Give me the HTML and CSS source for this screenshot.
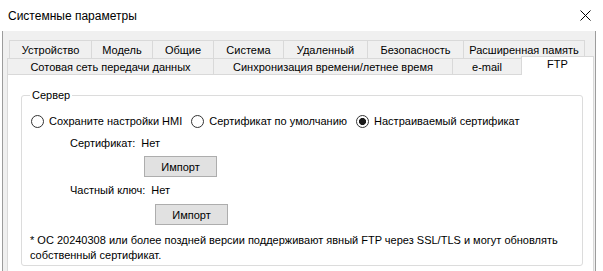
FILE: index.html
```html
<!DOCTYPE html>
<html lang="ru">
<head>
    <meta charset="UTF-8">
    <meta name="viewport" content="width=device-width, initial-scale=1.0">
    <title>Системные параметры</title>
    <link rel="stylesheet" href="styles.css">
</head>
<body>
    <div class="window">
        <div class="titlebar">
            <span class="title">Системные параметры</span>
            <button class="close" title="Закрыть">
                <svg width="11" height="11" viewBox="0 0 11 11">
                    <path d="M0.5 0.5 L10.5 10.5 M10.5 0.5 L0.5 10.5" stroke="#000" stroke-width="1" fill="none"/>
                </svg>
            </button>
        </div>

        <div class="client">
            <div class="tabs">
                <div class="tab-row back">
                    <div class="tab w-device">Устройство</div>
                    <div class="tab w-model">Модель</div>
                    <div class="tab w-common">Общие</div>
                    <div class="tab w-system">Система</div>
                    <div class="tab w-remote">Удаленный</div>
                    <div class="tab w-security">Безопасность</div>
                    <div class="tab w-memory">Расширенная память</div>
                </div>
                <div class="tab-row front">
                    <div class="tab w-cell">Сотовая сеть передачи данных</div>
                    <div class="tab w-sync">Синхронизация времени/летнее время</div>
                    <div class="tab w-mail">e-mail</div>
                    <div class="tab w-ftp selected">FTP</div>
                </div>
            </div>

            <div class="pane">
                <fieldset class="group">
                    <legend>Сервер</legend>

                    <div class="radios">
                        <label class="radio"><input type="radio" name="cert"> Сохраните настройки HMI</label>
                        <label class="radio"><input type="radio" name="cert"> Сертификат по умолчанию</label>
                        <label class="radio"><input type="radio" name="cert" checked> Настраиваемый сертификат</label>
                    </div>

                    <div class="field">
                        <span>Сертификат:</span>
                        <span>Нет</span>
                    </div>
                    <button class="btn btn-cert">Импорт</button>

                    <div class="field field-key">
                        <span>Частный ключ:</span>
                        <span>Нет</span>
                    </div>
                    <button class="btn btn-key">Импорт</button>

                    <p class="note">* ОС 20240308 или более поздней версии поддерживают явный FTP через SSL/TLS и могут обновлять<br>собственный сертификат.</p>
                </fieldset>
            </div>
        </div>
    </div>
</body>
</html>
```

FILE: styles.css
```css
* {
    margin: 0;
    padding: 0;
    box-sizing: border-box;
    font-family: 'Liberation Sans', Arial, sans-serif;
    font-size: 11px;
    color: #000;
}

body {
    background-color: #fff;
    overflow: hidden;
}

.window {
    width: 603px;
    height: 271px;
    display: flex;
    flex-direction: column;
    overflow: hidden;
}

/* title bar */
.titlebar {
    height: 31px;
    flex-shrink: 0;
    display: flex;
    align-items: center;
    justify-content: space-between;
    padding-left: 8px;
    padding-right: 12px;
    background-color: #fff;
}

.title {
    font-size: 12px;
}

.close {
    border: none;
    background: none;
    display: flex;
    align-items: center;
    cursor: pointer;
}

/* dialog body */
.client {
    flex: 1;
    min-height: 0;
    margin: 0 7px 0 2px;
    padding: 9px 1px 0 4px;
    background-color: #f0f0f0;
    border-left: 1px solid #9c9c9c;
    border-right: 1px solid #9c9c9c;
    display: flex;
    flex-direction: column;
}

.tabs {
    flex-shrink: 0;
}

.tab-row {
    display: flex;
}

.tab-row.back {
    margin-left: 2px;
}

.tab {
    border: 1px solid #d9d9d9;
    border-bottom: none;
    background-color: #f0f0f0;
    text-align: center;
    white-space: nowrap;
    margin-left: -1px;
}

.tab:first-child {
    margin-left: 0;
}

.back .tab {
    height: 18px;
    line-height: 18px;
}

.front .tab {
    height: 16px;
    line-height: 17px;
}

.tab.selected {
    background-color: #fff;
    height: 19px;
    margin-top: -2px;
    margin-bottom: -1px;
    line-height: 14px;
    position: relative;
    z-index: 1;
}

.w-device { width: 83px; }
.w-model { width: 62px; }
.w-common { width: 62px; }
.w-system { width: 71px; }
.w-remote { width: 85px; }
.w-security { width: 97px; }
.w-memory { width: 122px; }

.w-cell { width: 207px; }
.w-sync { width: 240px; }
.w-mail { width: 70px; }
.w-ftp { width: 73px; }

/* tab page */
.pane {
    flex: 1;
    background-color: #fff;
    border: 1px solid #d9d9d9;
    border-bottom: none;
    padding: 13px 10px 0 13px;
}

.group {
    border: 1px solid #dcdcdc;
    border-radius: 3px;
    padding: 0 0 2px 0;
}

.group legend {
    margin-left: 8px;
    padding: 0 2px;
    line-height: 14px;
}

.radios {
    display: flex;
    align-items: center;
    margin-top: 12px;
    padding-left: 9px;
    height: 14px;
}

.radio {
    display: flex;
    align-items: center;
    gap: 5px;
    margin-right: 9px;
    white-space: nowrap;
}

.radio input {
    appearance: none;
    width: 13px;
    height: 13px;
    border: 1px solid #333;
    border-radius: 50%;
    background-color: #fff;
}

.radio input:checked {
    background: radial-gradient(circle, #1a1a1a 0 3.3px, #fff 3.8px);
}

.field {
    display: flex;
    gap: 6px;
    margin-top: 8px;
    margin-left: 48px;
    line-height: 14px;
}

.field-key {
    margin-top: 6px;
}

.btn {
    display: block;
    width: 73px;
    height: 21px;
    background-color: #e1e1e1;
    border: 1px solid #adadad;
    text-align: center;
    cursor: pointer;
}

.btn-cert {
    margin: 6px 0 0 122px;
}

.btn-key {
    margin: 7px 0 0 133px;
}

.note {
    margin: 8px 0 0 8px;
    line-height: 15px;
}
```
